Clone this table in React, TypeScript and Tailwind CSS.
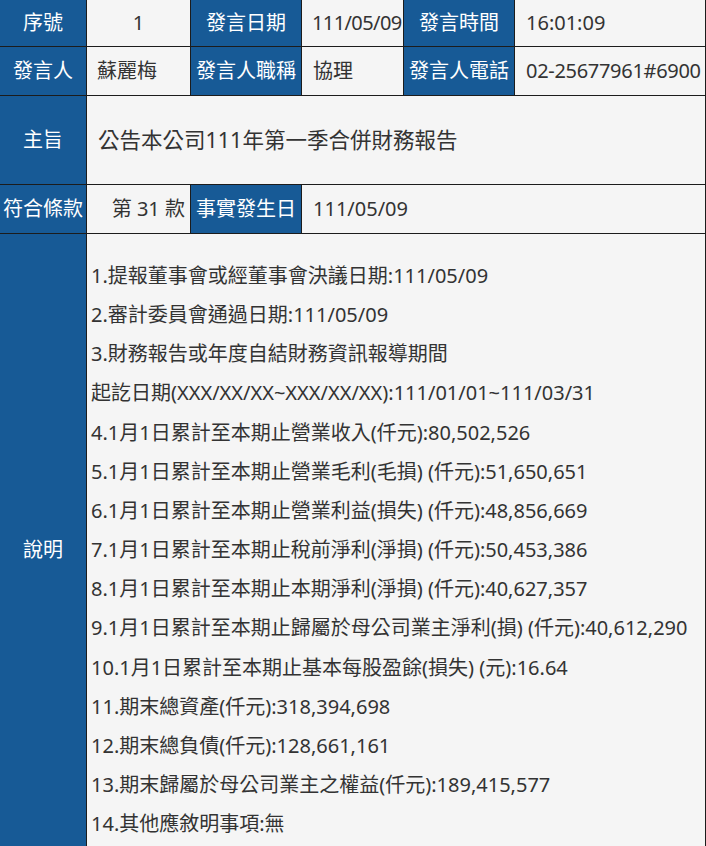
import React from "react";

const H = "bg-[#175a96] text-white flex items-center justify-center whitespace-nowrap";
const V = "bg-[#f5f5f5] text-[#333] flex items-center whitespace-nowrap";

const lines = [
  "1.提報董事會或經董事會決議日期:111/05/09",
  "2.審計委員會通過日期:111/05/09",
  "3.財務報告或年度自結財務資訊報導期間",
  "起訖日期(XXX/XX/XX~XXX/XX/XX):111/01/01~111/03/31",
  "4.1月1日累計至本期止營業收入(仟元):80,502,526",
  "5.1月1日累計至本期止營業毛利(毛損) (仟元):51,650,651",
  "6.1月1日累計至本期止營業利益(損失) (仟元):48,856,669",
  "7.1月1日累計至本期止稅前淨利(淨損) (仟元):50,453,386",
  "8.1月1日累計至本期止本期淨利(淨損) (仟元):40,627,357",
  "9.1月1日累計至本期止歸屬於母公司業主淨利(損) (仟元):40,612,290",
  "10.1月1日累計至本期止基本每股盈餘(損失) (元):16.64",
  "11.期末總資產(仟元):318,394,698",
  "12.期末總負債(仟元):128,661,161",
  "13.期末歸屬於母公司業主之權益(仟元):189,415,577",
  "14.其他應敘明事項:無",
];

export default function App() {
  return (
    <div
      className="w-[706px] bg-[#1c1c1c] text-[20px]"
      style={{ fontFamily: '"Noto Sans", "Noto Sans CJK TC", sans-serif' }}
    >
      <div className="grid grid-cols-[86px_103px_110px_101px_110px_190px] grid-rows-[46px_48px_88px_48px_auto] gap-px pr-px">
        <div className={H}>序號</div>
        <div className={`${V} justify-center`}>1</div>
        <div className={H}>發言日期</div>
        <div className={`${V} pl-[10px] tracking-[-0.6px]`}>111/05/09</div>
        <div className={H}>發言時間</div>
        <div className={`${V} pl-[11px]`}>16:01:09</div>

        <div className={H}>發言人</div>
        <div className={`${V} pl-[10px]`}>蘇麗梅</div>
        <div className={H}>發言人職稱</div>
        <div className={`${V} pl-[11px]`}>協理</div>
        <div className={H}>發言人電話</div>
        <div className={`${V} pl-[11px] tracking-[-0.3px]`}>02-25677961#6900</div>

        <div className={H}>主旨</div>
        <div className={`${V} col-span-5 pl-[11px] text-[21.5px]`}>公告本公司111年第一季合併財務報告</div>

        <div className={H}>符合條款</div>
        <div className={`${V} justify-end pr-[5px]`}>第 31 款</div>
        <div className={H}>事實發生日</div>
        <div className={`${V} col-span-3 pl-[11px]`}>111/05/09</div>

        <div className={H}>說明</div>
        <div className="col-span-5 bg-[#f5f5f5] text-[#333] pl-[4px] py-[22px] leading-[39.15px] whitespace-nowrap">
          {lines.map((l, i) => (
            <div key={i}>{l}</div>
          ))}
        </div>
      </div>
    </div>
  );
}
